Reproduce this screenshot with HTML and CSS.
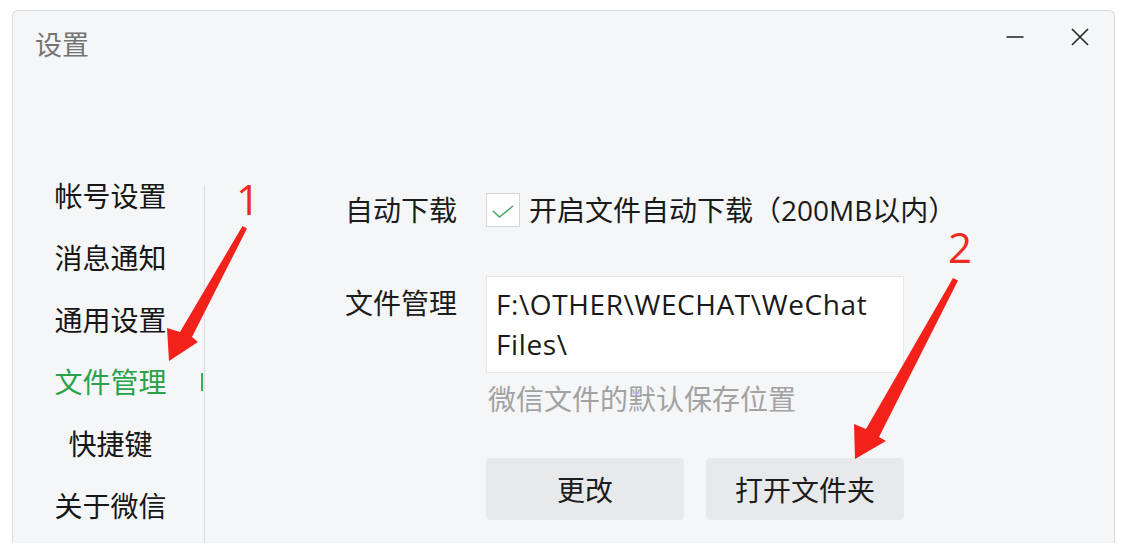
FILE: index.html
```html
<!DOCTYPE html>
<html lang="zh-CN">
<head>
<meta charset="utf-8">
<title>设置</title>
<link rel="stylesheet" href="styles.css">
</head>
<body>
<div class="window">
  <div class="titlebar">
    <div class="title">设置</div>
    <div class="controls">
      <div class="ctl">
        <svg width="18" height="18" viewBox="0 0 18 18"><line x1="0.5" y1="9" x2="17.5" y2="9" stroke="#2a2a2a" stroke-width="1.6"/></svg>
      </div>
      <div class="ctl">
        <svg width="18" height="18" viewBox="0 0 18 18"><path d="M1 1 L17 17 M17 1 L1 17" stroke="#2a2a2a" stroke-width="1.7" fill="none"/></svg>
      </div>
    </div>
  </div>
  <div class="main">
    <nav class="nav">
      <div class="nav-item">帐号设置</div>
      <div class="nav-item">消息通知</div>
      <div class="nav-item">通用设置</div>
      <div class="nav-item active">文件管理</div>
      <div class="nav-item">快捷键</div>
      <div class="nav-item">关于微信</div>
    </nav>
    <div class="divider"></div>
    <section class="content">
      <div class="row row-download">
        <div class="label">自动下载</div>
        <div class="check-wrap">
          <div class="checkbox">
            <svg width="32" height="32" viewBox="0 0 32 32"><path d="M6 17 L12.5 23 L26 12" stroke="#4aa866" stroke-width="1.6" fill="none"/></svg>
          </div>
          <div class="check-text">开启文件自动下载（200MB以内）</div>
        </div>
      </div>
      <div class="row row-files">
        <div class="label label-files">文件管理</div>
        <div class="files">
          <div class="path">F:\OTHER\WECHAT\WeChat Files\</div>
          <div class="hint">微信文件的默认保存位置</div>
          <div class="buttons">
            <div class="btn">更改</div>
            <div class="btn">打开文件夹</div>
          </div>
        </div>
      </div>
    </section>
  </div>
</div>

<svg class="annot" width="1132" height="554" viewBox="0 0 1132 554">
  <polygon fill="#f2221b" points="242.5,226 247,228.5 192,337 198,342 169,361 167,328 180,332"/>
  <polygon fill="#f2221b" points="953,278 958,280.5 879,437 886,441 855,459 854,424 866,429"/>
</svg>
<div class="num num1">1</div>
<div class="num num2">2</div>
</body>
</html>
```

FILE: styles.css
```css
* { box-sizing: border-box; }
html, body { margin: 0; padding: 0; }
body {
  width: 1132px;
  height: 554px;
  background: #ffffff;
  font-family: "Open Sans", "Noto Sans CJK SC", sans-serif;
  color: #1c1c1c;
  position: relative;
  overflow: hidden;
}
.window {
  margin: 10px 0 0 12px;
  width: 1103px;
  height: 533px;
  background: #f5f6f7;
  border: 1px solid #d9d9d9;
  border-bottom: none;
  border-radius: 6px 6px 0 0;
  display: flex;
  flex-direction: column;
}
.titlebar {
  height: 154px;
  flex: none;
  display: flex;
  justify-content: space-between;
  align-items: flex-start;
  padding: 6px 9px 0 22px;
}
.title {
  margin-top: 10px;
  font-size: 27px;
  line-height: 36px;
  color: #747474;
}
.controls {
  display: flex;
  gap: 15px;
}
.ctl {
  width: 50px;
  height: 40px;
  display: flex;
  align-items: center;
  justify-content: center;
}
.main {
  flex: 1;
  display: flex;
  min-height: 0;
}
.nav {
  width: 191px;
  flex: none;
  padding-left: 4px;
  display: flex;
  flex-direction: column;
}
.nav-item {
  height: 62px;
  line-height: 62px;
  text-align: center;
  font-size: 28px;
  color: #161616;
  position: relative;
}
.nav-item.active { color: #2aa14a; }
.nav-item.active::after {
  content: "";
  position: absolute;
  right: 1px;
  top: 22px;
  width: 2px;
  height: 18px;
  background: #2fb34e;
}
.divider {
  width: 1px;
  flex: none;
  margin-top: 20px;
  background: #dcdcdc;
}
.content {
  flex: 1;
  padding: 28px 0 0 140px;
  display: flex;
  flex-direction: column;
  gap: 49px;
}
.row {
  display: flex;
  align-items: flex-start;
}
.label {
  width: 141px;
  flex: none;
  font-size: 28px;
  color: #1c1c1c;
}
.row-download { align-items: center; }
.row-download .label { line-height: 34px; }
.check-wrap {
  display: flex;
  align-items: center;
  gap: 9px;
}
.checkbox {
  width: 34px;
  height: 34px;
  background: #ffffff;
  border: 1px solid #d6d6d6;
  display: flex;
  align-items: center;
  justify-content: center;
}
.check-text {
  font-size: 28px;
  line-height: 34px;
  color: #1a1a1a;
}
.label-files {
  padding-top: 7px;
  line-height: 40px;
}
.files {
  display: flex;
  flex-direction: column;
}
.path {
  width: 418px;
  height: 97px;
  background: #ffffff;
  border: 1px solid #e6e6e6;
  padding: 7px 10px 8px 9px;
  font-size: 28px;
  letter-spacing: 0.6px;
  line-height: 40px;
  color: #1a1a1a;
}
.hint {
  margin-top: 8px;
  padding-left: 2px;
  font-size: 28px;
  line-height: 36px;
  color: #a2a2a2;
}
.buttons {
  margin-top: 41px;
  display: flex;
  gap: 22px;
}
.btn {
  width: 198px;
  height: 62px;
  border-radius: 4px;
  background: #e8e9eb;
  display: flex;
  align-items: center;
  justify-content: center;
  font-size: 28px;
  color: #1c1c1c;
}
.annot {
  position: absolute;
  left: 0;
  top: 0;
  pointer-events: none;
}
.num {
  position: absolute;
  font-family: "Open Sans", sans-serif;
  font-size: 42px;
  line-height: 42px;
  color: #ec2a22;
}
.num1 { left: 236px; top: 178px; }
.num2 { left: 948px; top: 226px; }
```
